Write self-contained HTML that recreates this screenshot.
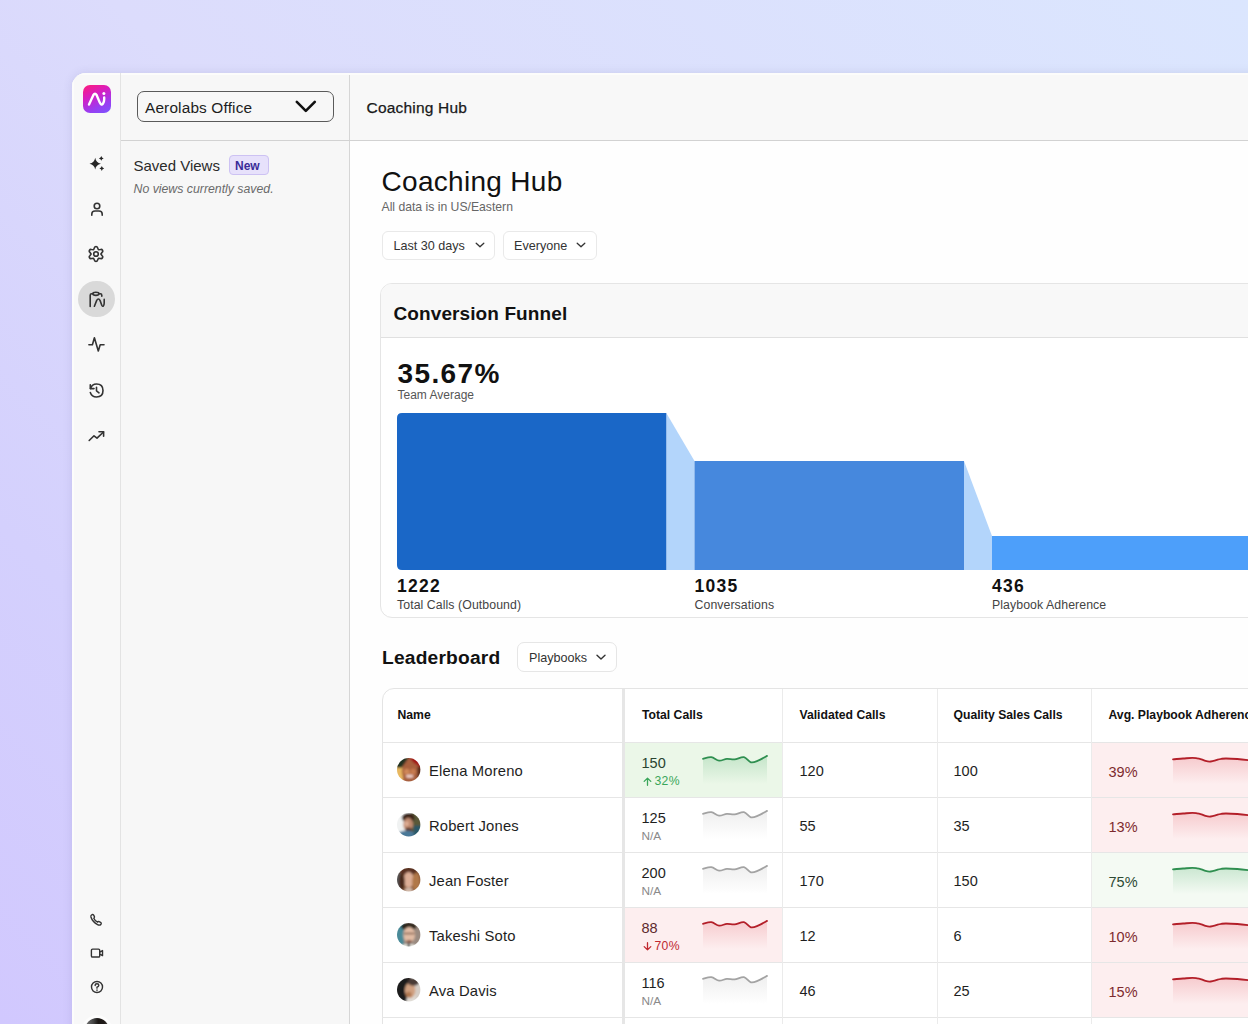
<!DOCTYPE html>
<html><head><meta charset="utf-8">
<style>
*{box-sizing:border-box;margin:0;padding:0}
html,body{width:1248px;height:1024px;overflow:hidden}
body{font-family:"Liberation Sans",sans-serif;position:relative;
background:linear-gradient(225deg,#dbe6fe 0%,#dcdcfc 50%,#d4d0fd 78%,#d1c8fe 100%);color:#1a1a1a}
.a{position:absolute;white-space:nowrap;line-height:1}
#win{position:absolute;left:72px;top:73px;width:1300px;height:1100px;background:#f8f8f8;border-top-left-radius:14px;box-shadow:0 0 10px rgba(70,70,120,.13);overflow:hidden}
#rail{position:absolute;left:0;top:0;width:49px;box-shadow:inset 2px 2px 0 #fcfcfb;height:100%;background:#f8f8f8;border-right:1px solid #e3e3e3}
#panel{position:absolute;left:49px;top:0;width:229px;height:100%;background:#f7f7f7;border-right:1px solid #d6d6d6}
#phead{position:absolute;left:49px;top:0;width:1300px;height:68px;border-bottom:1px solid #d2d2d2;box-shadow:inset 0 2px 0 #fcfcfb}
#mainbg{position:absolute;left:278px;top:68px;width:1100px;height:1100px;background:#fefefe}
svg{position:absolute;overflow:visible}
.ic{fill:none;stroke:#333;stroke-width:1.6;stroke-linecap:round;stroke-linejoin:round}
</style></head><body>
<div id="win">
  <div id="rail"></div>
  <div id="panel"></div>
  <div id="mainbg"></div>
  <div id="phead"></div>
</div>

<!-- logo -->
<div class="a" style="left:83px;top:85px;width:28px;height:28px;border-radius:7px;background:linear-gradient(155deg,#ff1d78 0%,#d81ebf 35%,#9c3cf0 70%,#7a56ff 100%)"></div>
<svg style="left:83px;top:85px" width="28" height="28" viewBox="0 0 28 28"><path d="M6 19.6 L10.4 10 Q12 7.4 13.6 10 L16.8 17.6 Q18.4 21 20 18.6 Q21.2 16.8 21.2 14.2 V12.4" fill="none" stroke="#fff" stroke-width="2.4" stroke-linecap="round" stroke-linejoin="round"/><circle cx="20.9" cy="8.6" r="1.5" fill="#fff"/></svg>

<!-- rail icons -->
<svg style="left:88px;top:155px" width="17" height="17" viewBox="0 0 17 17"><path d="M7.2 2.8 Q8 7.8 12.9 8.7 Q8 9.6 7.2 14.5 Q6.4 9.6 1.5 8.7 Q6.4 7.8 7.2 2.8Z" fill="#262626"/><path d="M13.3 1 Q13.7 3 15.7 3.4 Q13.7 3.8 13.3 5.8 Q12.9 3.8 10.9 3.4 Q12.9 3 13.3 1Z" fill="#262626"/><path d="M13.8 11.1 Q14.2 13.1 16.2 13.5 Q14.2 13.9 13.8 15.9 Q13.4 13.9 11.4 13.5 Q13.4 13.1 13.8 11.1Z" fill="#262626"/></svg>
<svg style="left:89px;top:201px" width="16" height="16" viewBox="0 0 16 16"><circle class="ic" cx="8" cy="5" r="2.8"/><path class="ic" d="M2.8 14.2 V13 Q2.8 10 6 10 H10 Q13.2 10 13.2 13 V14.2"/></svg>
<svg style="left:84.2px;top:242.3px" width="24" height="24" viewBox="0 0 24 24"><path class="ic" stroke-width="1.5" d="M10.45 5.79 C10.75 4.10 13.25 4.10 13.55 5.79 L14.45 7.76 L16.60 7.55 C18.22 6.97 19.47 9.13 18.15 10.24 L16.90 12.00 L18.15 13.76 C19.47 14.87 18.22 17.03 16.60 16.45 L14.45 16.24 L13.55 18.21 C13.25 19.90 10.75 19.90 10.45 18.21 L9.55 16.24 L7.40 16.45 C5.78 17.03 4.53 14.87 5.85 13.76 L7.10 12.00 L5.85 10.24 C4.53 9.13 5.78 6.97 7.40 7.55 L9.55 7.76Z"/><circle class="ic" stroke-width="1.5" cx="12" cy="12" r="2.3"/></svg>
<div class="a" style="left:78.4px;top:280.6px;width:36.6px;height:36.6px;border-radius:50%;background:#d9d9d9"></div>
<svg style="left:89px;top:291px" width="17" height="17" viewBox="0 0 17 17"><path class="ic" stroke-width="1.7" d="M1.2 15.5 V4.2 Q1.2 2.7 2.7 2.7 H3.7"/><ellipse class="ic" stroke-width="1.6" cx="6.9" cy="2.8" rx="3.1" ry="1.6"/><path class="ic" stroke-width="1.7" d="M10 2.7 H11.4 Q12.8 2.7 12.8 4.2 V5.3"/><path class="ic" stroke-width="1.7" d="M5.4 15.2 L7.6 9.6 Q8.4 8 9.4 8 Q10.4 8 11.1 9.6 L12.8 14.2 Q13.4 15.6 14.3 15 Q15.2 14.3 15.2 12 V8.4"/></svg>
<svg style="left:88px;top:336px" width="17" height="17" viewBox="0 0 17 17"><path class="ic" stroke-width="1.6" d="M0.9 8.7 H4.4 L6.4 1.8 L10.3 15 L12.2 8.7 H16"/></svg>
<svg style="left:88px;top:382px" width="17" height="17" viewBox="0 0 17 17"><path class="ic" stroke-width="1.6" d="M2.5 6.5 Q4 2 8.5 2 Q15 2 15 8.5 Q15 15 8.5 15 Q3.8 15 2.3 10.5"/><path class="ic" stroke-width="1.6" d="M2.3 2.8 V6.6 H6"/><path class="ic" stroke-width="1.6" d="M8.5 5.2 V8.8 L11 10.8"/></svg>
<svg style="left:88px;top:427px" width="17" height="17" viewBox="0 0 17 17"><path class="ic" stroke-width="1.7" d="M1.2 13.5 L6 8.8 L9 11.2 L15.5 5"/><path class="ic" stroke-width="1.7" d="M11 4.8 H15.6 V9.3"/></svg>
<!-- bottom rail icons -->
<svg style="left:89.4px;top:912.9px" width="14" height="14" viewBox="0 0 16 16"><path class="ic" stroke-width="1.5" d="M3.5 1.8 Q1.8 2.5 2.2 4.5 Q4 10 9.8 13.3 Q12 14.5 13.6 13 Q14.6 11.6 13.2 10.6 L11.6 9.8 Q10.5 9.3 9.8 10.5 Q7 9.5 5.5 6 Q6.6 5.2 6.2 4.1 L5.3 2.4 Q4.6 1.4 3.5 1.8Z"/></svg>
<svg style="left:89.6px;top:946.2px" width="14" height="14" viewBox="0 0 16 16"><rect class="ic" stroke-width="1.5" x="1.6" y="3.6" width="9.5" height="9" rx="1.3"/><path class="ic" stroke-width="1.5" d="M11.1 7 L14.3 5.2 V11 L11.1 9.2"/></svg>
<svg style="left:89.5px;top:979.7px" width="14" height="14" viewBox="0 0 16 16"><circle class="ic" stroke-width="1.5" cx="8" cy="8" r="6.3"/><path class="ic" stroke-width="1.5" d="M5.9 6.2 Q5.9 4.2 8 4.2 Q10.1 4.2 10.1 6 Q10.1 7.4 8 8.3 V9.3"/><circle cx="8" cy="11.6" r="0.9" fill="#333"/></svg>
<div class="a" style="left:84.5px;top:1017.5px;width:24px;height:24px;border-radius:50%;box-shadow:0 0 0 3px #fdfdfd;background:linear-gradient(90deg,#777 0%,#444 35%,#1a1614 55%,#201a18 80%,#555 100%)"></div>

<!-- panel -->
<div class="a" style="left:137px;top:91px;width:197px;height:31px;border:1.3px solid #5a5a5a;border-radius:7px"></div>
<div class="a" style="left:145px;top:100px;font-size:15.4px;color:#1d1d1d;letter-spacing:0.15px">Aerolabs Office</div>
<svg style="left:295px;top:100px" width="22" height="13" viewBox="0 0 22 13"><path d="M1.8 1.8 L10.8 10.8 L19.8 1.8" fill="none" stroke="#111" stroke-width="2.6" stroke-linecap="round" stroke-linejoin="round"/></svg>

<div class="a" style="left:133.5px;top:158px;font-size:15px;color:#2a2a2a">Saved Views</div>
<div class="a" style="left:229px;top:155px;width:40px;height:20px;border-radius:4px;background:#e7e1fb;border:1px solid #cdc2f3"></div>
<div class="a" style="left:235px;top:159.5px;font-size:12px;font-weight:bold;color:#3a2c98">New</div>
<div class="a" style="left:133.5px;top:183px;font-size:12.3px;font-style:italic;color:#6a6a6a">No views currently saved.</div>

<!-- header -->
<div class="a" style="left:366.5px;top:99.5px;font-size:15.5px;color:#1a1a1a;-webkit-text-stroke:0.25px #1a1a1a;letter-spacing:0.2px">Coaching Hub</div>

<!-- main title -->
<div class="a" style="left:381.5px;top:168px;font-size:28px;color:#111;letter-spacing:0.3px">Coaching Hub</div>
<div class="a" style="left:381.5px;top:200.5px;font-size:12.2px;color:#666">All data is in US/Eastern</div>

<div class="a" style="left:382px;top:231px;width:113px;height:29px;border:1px solid #e9e9e9;border-radius:6px;background:#fff"></div>
<div class="a" style="left:393.5px;top:239.5px;font-size:12.6px;color:#333">Last 30 days</div>
<svg style="left:475px;top:242px" width="10" height="7" viewBox="0 0 10 7"><path d="M1.2 1.2 L5 4.8 L8.8 1.2" fill="none" stroke="#333" stroke-width="1.3" stroke-linecap="round" stroke-linejoin="round"/></svg>
<div class="a" style="left:502.5px;top:231px;width:94px;height:29px;border:1px solid #e9e9e9;border-radius:6px;background:#fff"></div>
<div class="a" style="left:514px;top:239.5px;font-size:12.6px;color:#333">Everyone</div>
<svg style="left:576px;top:242px" width="10" height="7" viewBox="0 0 10 7"><path d="M1.2 1.2 L5 4.8 L8.8 1.2" fill="none" stroke="#333" stroke-width="1.3" stroke-linecap="round" stroke-linejoin="round"/></svg>

<!-- funnel card -->
<div class="a" style="left:380px;top:283px;width:900px;height:335px;border:1px solid #e5e5e5;border-radius:12px;background:#fff;overflow:hidden">
  <div style="position:absolute;left:0;top:0;width:100%;height:54px;background:#f8f8f8;border-bottom:1px solid #e0e0e0"></div>
</div>
<div class="a" style="left:393.5px;top:303.5px;font-size:19px;font-weight:bold;color:#111;letter-spacing:0.1px">Conversion Funnel</div>
<div class="a" style="left:397.5px;top:360px;font-size:28px;font-weight:bold;color:#111;letter-spacing:1.4px">35.67%</div>
<div class="a" style="left:397.5px;top:388.5px;font-size:12px;color:#555">Team Average</div>

<svg style="left:0;top:0" width="1248" height="1024">
  <path d="M666.3 413 L694.5 461 V570 H666.3Z" fill="#b3d5fb"/>
  <path d="M964 461 L992 536 V570 H964Z" fill="#b3d5fb"/>
  <path d="M402 413 H666.3 V570 H402 Q397 570 397 565 V418 Q397 413 402 413Z" fill="#1a67c7"/>
  <rect x="694.5" y="461" width="269.5" height="109" fill="#4688dd"/>
  <rect x="992" y="536" width="300" height="34" fill="#4d9ffa"/>
</svg>
<div class="a" style="left:397px;top:578px;font-size:17.5px;font-weight:bold;color:#111;letter-spacing:1.3px">1222</div>
<div class="a" style="left:397px;top:598.6px;font-size:12.3px;color:#444;letter-spacing:0.08px">Total Calls (Outbound)</div>
<div class="a" style="left:694.5px;top:578px;font-size:17.5px;font-weight:bold;color:#111;letter-spacing:1.3px">1035</div>
<div class="a" style="left:694.5px;top:598.6px;font-size:12.3px;color:#444;letter-spacing:0.08px">Conversations</div>
<div class="a" style="left:992px;top:578px;font-size:17.5px;font-weight:bold;color:#111;letter-spacing:1.3px">436</div>
<div class="a" style="left:992px;top:598.6px;font-size:12.3px;color:#444;letter-spacing:0.08px">Playbook Adherence</div>

<!-- leaderboard -->
<div class="a" style="left:382px;top:647.5px;font-size:19.2px;font-weight:bold;color:#111;letter-spacing:0.2px">Leaderboard</div>
<div class="a" style="left:517px;top:642px;width:100px;height:30px;border:1px solid #e6e6e6;border-radius:7px;background:#fff"></div>
<div class="a" style="left:529px;top:652px;font-size:12.6px;color:#333">Playbooks</div>
<svg style="left:596px;top:654px" width="10" height="7" viewBox="0 0 10 7"><path d="M1 1.2 L5 5 L9 1.2" fill="none" stroke="#333" stroke-width="1.4" stroke-linecap="round" stroke-linejoin="round"/></svg>

<div id="table">
<div class="a" style="left:381.5px;top:688px;width:900px;height:400px;border:1px solid #e4e4e4;border-radius:12px;background:#fff"></div>
<div class="a" style="left:625px;top:743px;width:157px;height:54px;background:#ebf7e8"></div>
<div class="a" style="left:1092px;top:743px;width:160px;height:54px;background:#fdeeef"></div>
<div class="a" style="left:1092px;top:798px;width:160px;height:54px;background:#fdeeef"></div>
<div class="a" style="left:1092px;top:853px;width:160px;height:54px;background:#f4faf3"></div>
<div class="a" style="left:625px;top:908px;width:157px;height:54px;background:#fdeeef"></div>
<div class="a" style="left:1092px;top:908px;width:160px;height:54px;background:#fdeeef"></div>
<div class="a" style="left:1092px;top:963px;width:160px;height:54px;background:#fdeeef"></div>
<div class="a" style="left:382px;top:742px;width:870px;height:1px;background:#e6e6e6"></div>
<div class="a" style="left:382px;top:797px;width:870px;height:1px;background:#e6e6e6"></div>
<div class="a" style="left:382px;top:852px;width:870px;height:1px;background:#e6e6e6"></div>
<div class="a" style="left:382px;top:907px;width:870px;height:1px;background:#e6e6e6"></div>
<div class="a" style="left:382px;top:962px;width:870px;height:1px;background:#e6e6e6"></div>
<div class="a" style="left:382px;top:1017px;width:870px;height:1px;background:#e6e6e6"></div>
<div class="a" style="left:622px;top:689px;width:3px;height:340px;background:#e6e6e6"></div>
<div class="a" style="left:782px;top:689px;width:1px;height:340px;background:#ebebeb"></div>
<div class="a" style="left:937px;top:689px;width:1px;height:340px;background:#ebebeb"></div>
<div class="a" style="left:1091px;top:689px;width:1px;height:340px;background:#ebebeb"></div>
<div class="a" style="left:397.5px;top:709.0px;font-size:12.2px;color:#111;font-weight:bold;">Name</div>
<div class="a" style="left:642px;top:709.0px;font-size:12.2px;color:#111;font-weight:bold;">Total Calls</div>
<div class="a" style="left:799.5px;top:709.0px;font-size:12.2px;color:#111;font-weight:bold;">Validated Calls</div>
<div class="a" style="left:953.5px;top:709.0px;font-size:12.2px;color:#111;font-weight:bold;">Quality Sales Calls</div>
<div class="a" style="left:1108.5px;top:709.0px;font-size:12.2px;color:#111;font-weight:bold;">Avg. Playbook Adherence</div>
<svg style="left:397.3px;top:758.3px" width="23.4" height="23.4" viewBox="0 0 24 24"><defs><clipPath id="ac0"><circle cx="12" cy="12" r="12"/></clipPath><filter id="bl0" x="-20%" y="-20%" width="140%" height="140%"><feGaussianBlur stdDeviation="1"/></filter></defs><g clip-path="url(#ac0)"><g filter="url(#bl0)"><rect x="-2" y="-2" width="28" height="28" fill="#a86040"/><rect x="-2" y="6" width="8" height="18" fill="#e8b860"/><path d="M0 -2 H13 L5 10 H-2Z" fill="#203020"/><path d="M11 -2 H26 V11 L17 5Z" fill="#a01818"/><ellipse cx="13" cy="13.5" rx="8" ry="9.5" fill="#a8603e"/><ellipse cx="10" cy="14" rx="3" ry="3" fill="#d08858"/><ellipse cx="16.5" cy="14" rx="2.8" ry="3" fill="#c87c50"/><ellipse cx="13" cy="18.6" rx="3.8" ry="1.6" fill="#f0d0c8"/><rect x="21" y="9" width="5" height="14" fill="#5a2a1a"/></g></g></svg>
<div class="a" style="left:429px;top:763.7px;font-size:14.8px;color:#1e1e1e;letter-spacing:0.15px;">Elena Moreno</div>
<div class="a" style="left:641.5px;top:756.4px;font-size:14.5px;color:#2a4430;">150</div>
<svg style="left:643px;top:776.6px" width="9" height="9" viewBox="0 0 9 9"><path d="M4.5 8.3 V1.2 M1.2 4.4 L4.5 1.1 L7.8 4.4" fill="none" stroke="#3aa65a" stroke-width="1.3" stroke-linecap="round" stroke-linejoin="round"/></svg>
<div class="a" style="left:654.5px;top:775.3px;font-size:12.2px;color:#3aa65a;letter-spacing:0.3px;">32%</div>
<svg style="left:703.3px;top:754.5px" width="64" height="29" viewBox="0 0 64 29"><defs><linearGradient id="sg1" x1="0" y1="0" x2="0" y2="1"><stop offset="0" stop-color="#3ba55c" stop-opacity="0.22"/><stop offset="1" stop-color="#3ba55c" stop-opacity="0"/></linearGradient></defs><path d="M0.0 3.8 C1.4 3.5 5.7 1.9 8.34 2.2 C11.0 2.5 13.5 5.4 16.1 5.7 C18.7 6.0 21.3 4.0 23.86 3.8 C26.4 3.6 28.8 4.7 31.62 4.4 C34.5 4.1 38.2 1.7 40.93 2.2 C43.6 2.7 45.6 6.7 47.92 7.3 C50.3 7.9 52.3 6.8 55.0 5.7 C57.7 4.6 62.5 1.7 64.02 0.9 V29 H0Z" fill="url(#sg1)"/><path d="M0.0 3.8 C1.4 3.5 5.7 1.9 8.34 2.2 C11.0 2.5 13.5 5.4 16.1 5.7 C18.7 6.0 21.3 4.0 23.86 3.8 C26.4 3.6 28.8 4.7 31.62 4.4 C34.5 4.1 38.2 1.7 40.93 2.2 C43.6 2.7 45.6 6.7 47.92 7.3 C50.3 7.9 52.3 6.8 55.0 5.7 C57.7 4.6 62.5 1.7 64.02 0.9" fill="none" stroke="#2f8f50" stroke-width="1.8" stroke-linecap="round"/></svg>
<div class="a" style="left:799.5px;top:764.2px;font-size:14.5px;color:#1e1e1e;">120</div>
<div class="a" style="left:953.5px;top:764.2px;font-size:14.5px;color:#1e1e1e;">100</div>
<div class="a" style="left:1108.5px;top:764.7px;font-size:14.5px;color:#7d2a2e;">39%</div>
<svg style="left:1173px;top:756px" width="80" height="28" viewBox="0 0 80 28"><defs><linearGradient id="sg2" x1="0" y1="0" x2="0" y2="1"><stop offset="0" stop-color="#e0505a" stop-opacity="0.22"/><stop offset="1" stop-color="#e0505a" stop-opacity="0"/></linearGradient></defs><path d="M0 3.3 C1.7 3.2 6.8 2.7 10 2.5 C13.2 2.3 17.1 1.9 19.4 1.9 C21.7 1.9 22.5 2.1 24 2.3 C25.5 2.5 27.0 2.9 28.4 3.3 C29.8 3.7 31.1 4.5 32.5 4.9 C33.9 5.3 35.2 5.6 36.5 5.6 C37.8 5.6 39.1 5.2 40.5 4.9 C41.9 4.6 43.3 4.0 44.6 3.6 C45.9 3.2 47.1 3.0 48.5 2.8 C49.9 2.6 50.4 2.5 53 2.5 C55.6 2.5 60.1 2.7 64.3 3.0 C68.5 3.3 75.7 4.2 78 4.5 V28 H0Z" fill="url(#sg2)"/><path d="M0 3.3 C1.7 3.2 6.8 2.7 10 2.5 C13.2 2.3 17.1 1.9 19.4 1.9 C21.7 1.9 22.5 2.1 24 2.3 C25.5 2.5 27.0 2.9 28.4 3.3 C29.8 3.7 31.1 4.5 32.5 4.9 C33.9 5.3 35.2 5.6 36.5 5.6 C37.8 5.6 39.1 5.2 40.5 4.9 C41.9 4.6 43.3 4.0 44.6 3.6 C45.9 3.2 47.1 3.0 48.5 2.8 C49.9 2.6 50.4 2.5 53 2.5 C55.6 2.5 60.1 2.7 64.3 3.0 C68.5 3.3 75.7 4.2 78 4.5" fill="none" stroke="#b31f29" stroke-width="1.8" stroke-linecap="round"/></svg>
<svg style="left:397.3px;top:813.3px" width="23.4" height="23.4" viewBox="0 0 24 24"><defs><clipPath id="ac1"><circle cx="12" cy="12" r="12"/></clipPath><filter id="bl1" x="-20%" y="-20%" width="140%" height="140%"><feGaussianBlur stdDeviation="1"/></filter></defs><g clip-path="url(#ac1)"><g filter="url(#bl1)"><rect x="-2" y="-2" width="28" height="28" fill="#f0f2f2"/><path d="M14 -2 H26 V26 H14Z" fill="#5a5838"/><ellipse cx="11.5" cy="5" rx="6.5" ry="5" fill="#3a2418"/><ellipse cx="11.5" cy="12" rx="5" ry="7" fill="#c08a70"/><ellipse cx="10" cy="11" rx="2" ry="2.5" fill="#e0b098"/><ellipse cx="12" cy="17" rx="3.5" ry="2.2" fill="#5a3a30"/><ellipse cx="10" cy="24" rx="11" ry="6" fill="#4a7898"/><rect x="17" y="13" width="9" height="12" fill="#2a5868"/></g></g></svg>
<div class="a" style="left:429px;top:818.7px;font-size:14.8px;color:#1e1e1e;letter-spacing:0.15px;">Robert Jones</div>
<div class="a" style="left:641.5px;top:811.4px;font-size:14.5px;color:#1e1e1e;">125</div>
<div class="a" style="left:641.5px;top:830.6px;font-size:11.8px;color:#8a8a8a;">N/A</div>
<svg style="left:703.3px;top:809.5px" width="64" height="29" viewBox="0 0 64 29"><defs><linearGradient id="sg3" x1="0" y1="0" x2="0" y2="1"><stop offset="0" stop-color="#bdbdbd" stop-opacity="0.25"/><stop offset="1" stop-color="#bdbdbd" stop-opacity="0"/></linearGradient></defs><path d="M0.0 3.8 C1.4 3.5 5.7 1.9 8.34 2.2 C11.0 2.5 13.5 5.4 16.1 5.7 C18.7 6.0 21.3 4.0 23.86 3.8 C26.4 3.6 28.8 4.7 31.62 4.4 C34.5 4.1 38.2 1.7 40.93 2.2 C43.6 2.7 45.6 6.7 47.92 7.3 C50.3 7.9 52.3 6.8 55.0 5.7 C57.7 4.6 62.5 1.7 64.02 0.9 V29 H0Z" fill="url(#sg3)"/><path d="M0.0 3.8 C1.4 3.5 5.7 1.9 8.34 2.2 C11.0 2.5 13.5 5.4 16.1 5.7 C18.7 6.0 21.3 4.0 23.86 3.8 C26.4 3.6 28.8 4.7 31.62 4.4 C34.5 4.1 38.2 1.7 40.93 2.2 C43.6 2.7 45.6 6.7 47.92 7.3 C50.3 7.9 52.3 6.8 55.0 5.7 C57.7 4.6 62.5 1.7 64.02 0.9" fill="none" stroke="#a3a3a3" stroke-width="1.8" stroke-linecap="round"/></svg>
<div class="a" style="left:799.5px;top:819.2px;font-size:14.5px;color:#1e1e1e;">55</div>
<div class="a" style="left:953.5px;top:819.2px;font-size:14.5px;color:#1e1e1e;">35</div>
<div class="a" style="left:1108.5px;top:819.7px;font-size:14.5px;color:#7d2a2e;">13%</div>
<svg style="left:1173px;top:811px" width="80" height="28" viewBox="0 0 80 28"><defs><linearGradient id="sg4" x1="0" y1="0" x2="0" y2="1"><stop offset="0" stop-color="#e0505a" stop-opacity="0.22"/><stop offset="1" stop-color="#e0505a" stop-opacity="0"/></linearGradient></defs><path d="M0 3.3 C1.7 3.2 6.8 2.7 10 2.5 C13.2 2.3 17.1 1.9 19.4 1.9 C21.7 1.9 22.5 2.1 24 2.3 C25.5 2.5 27.0 2.9 28.4 3.3 C29.8 3.7 31.1 4.5 32.5 4.9 C33.9 5.3 35.2 5.6 36.5 5.6 C37.8 5.6 39.1 5.2 40.5 4.9 C41.9 4.6 43.3 4.0 44.6 3.6 C45.9 3.2 47.1 3.0 48.5 2.8 C49.9 2.6 50.4 2.5 53 2.5 C55.6 2.5 60.1 2.7 64.3 3.0 C68.5 3.3 75.7 4.2 78 4.5 V28 H0Z" fill="url(#sg4)"/><path d="M0 3.3 C1.7 3.2 6.8 2.7 10 2.5 C13.2 2.3 17.1 1.9 19.4 1.9 C21.7 1.9 22.5 2.1 24 2.3 C25.5 2.5 27.0 2.9 28.4 3.3 C29.8 3.7 31.1 4.5 32.5 4.9 C33.9 5.3 35.2 5.6 36.5 5.6 C37.8 5.6 39.1 5.2 40.5 4.9 C41.9 4.6 43.3 4.0 44.6 3.6 C45.9 3.2 47.1 3.0 48.5 2.8 C49.9 2.6 50.4 2.5 53 2.5 C55.6 2.5 60.1 2.7 64.3 3.0 C68.5 3.3 75.7 4.2 78 4.5" fill="none" stroke="#b31f29" stroke-width="1.8" stroke-linecap="round"/></svg>
<svg style="left:397.3px;top:868.3px" width="23.4" height="23.4" viewBox="0 0 24 24"><defs><clipPath id="ac2"><circle cx="12" cy="12" r="12"/></clipPath><filter id="bl2" x="-20%" y="-20%" width="140%" height="140%"><feGaussianBlur stdDeviation="1"/></filter></defs><g clip-path="url(#ac2)"><g filter="url(#bl2)"><rect x="-2" y="-2" width="28" height="28" fill="#8a5a3a"/><rect x="-2" y="3" width="5" height="19" fill="#585858"/><ellipse cx="12" cy="3" rx="9" ry="4.5" fill="#5a3020"/><ellipse cx="12" cy="12" rx="5.3" ry="8" fill="#dcae96"/><ellipse cx="19.5" cy="14" rx="4" ry="9" fill="#b07848"/><ellipse cx="5" cy="14" rx="3" ry="9" fill="#4a2c1c"/><ellipse cx="12" cy="23" rx="4" ry="3" fill="#d0b8a8"/></g></g></svg>
<div class="a" style="left:429px;top:873.7px;font-size:14.8px;color:#1e1e1e;letter-spacing:0.15px;">Jean Foster</div>
<div class="a" style="left:641.5px;top:866.4px;font-size:14.5px;color:#1e1e1e;">200</div>
<div class="a" style="left:641.5px;top:885.6px;font-size:11.8px;color:#8a8a8a;">N/A</div>
<svg style="left:703.3px;top:864.5px" width="64" height="29" viewBox="0 0 64 29"><defs><linearGradient id="sg5" x1="0" y1="0" x2="0" y2="1"><stop offset="0" stop-color="#bdbdbd" stop-opacity="0.25"/><stop offset="1" stop-color="#bdbdbd" stop-opacity="0"/></linearGradient></defs><path d="M0.0 3.8 C1.4 3.5 5.7 1.9 8.34 2.2 C11.0 2.5 13.5 5.4 16.1 5.7 C18.7 6.0 21.3 4.0 23.86 3.8 C26.4 3.6 28.8 4.7 31.62 4.4 C34.5 4.1 38.2 1.7 40.93 2.2 C43.6 2.7 45.6 6.7 47.92 7.3 C50.3 7.9 52.3 6.8 55.0 5.7 C57.7 4.6 62.5 1.7 64.02 0.9 V29 H0Z" fill="url(#sg5)"/><path d="M0.0 3.8 C1.4 3.5 5.7 1.9 8.34 2.2 C11.0 2.5 13.5 5.4 16.1 5.7 C18.7 6.0 21.3 4.0 23.86 3.8 C26.4 3.6 28.8 4.7 31.62 4.4 C34.5 4.1 38.2 1.7 40.93 2.2 C43.6 2.7 45.6 6.7 47.92 7.3 C50.3 7.9 52.3 6.8 55.0 5.7 C57.7 4.6 62.5 1.7 64.02 0.9" fill="none" stroke="#a3a3a3" stroke-width="1.8" stroke-linecap="round"/></svg>
<div class="a" style="left:799.5px;top:874.2px;font-size:14.5px;color:#1e1e1e;">170</div>
<div class="a" style="left:953.5px;top:874.2px;font-size:14.5px;color:#1e1e1e;">150</div>
<div class="a" style="left:1108.5px;top:874.7px;font-size:14.5px;color:#2d4a33;">75%</div>
<svg style="left:1173px;top:866px" width="80" height="28" viewBox="0 0 80 28"><defs><linearGradient id="sg6" x1="0" y1="0" x2="0" y2="1"><stop offset="0" stop-color="#3ba55c" stop-opacity="0.22"/><stop offset="1" stop-color="#3ba55c" stop-opacity="0"/></linearGradient></defs><path d="M0 3.3 C1.7 3.2 6.8 2.7 10 2.5 C13.2 2.3 17.1 1.9 19.4 1.9 C21.7 1.9 22.5 2.1 24 2.3 C25.5 2.5 27.0 2.9 28.4 3.3 C29.8 3.7 31.1 4.5 32.5 4.9 C33.9 5.3 35.2 5.6 36.5 5.6 C37.8 5.6 39.1 5.2 40.5 4.9 C41.9 4.6 43.3 4.0 44.6 3.6 C45.9 3.2 47.1 3.0 48.5 2.8 C49.9 2.6 50.4 2.5 53 2.5 C55.6 2.5 60.1 2.7 64.3 3.0 C68.5 3.3 75.7 4.2 78 4.5 V28 H0Z" fill="url(#sg6)"/><path d="M0 3.3 C1.7 3.2 6.8 2.7 10 2.5 C13.2 2.3 17.1 1.9 19.4 1.9 C21.7 1.9 22.5 2.1 24 2.3 C25.5 2.5 27.0 2.9 28.4 3.3 C29.8 3.7 31.1 4.5 32.5 4.9 C33.9 5.3 35.2 5.6 36.5 5.6 C37.8 5.6 39.1 5.2 40.5 4.9 C41.9 4.6 43.3 4.0 44.6 3.6 C45.9 3.2 47.1 3.0 48.5 2.8 C49.9 2.6 50.4 2.5 53 2.5 C55.6 2.5 60.1 2.7 64.3 3.0 C68.5 3.3 75.7 4.2 78 4.5" fill="none" stroke="#2f8f50" stroke-width="1.8" stroke-linecap="round"/></svg>
<svg style="left:397.3px;top:923.3px" width="23.4" height="23.4" viewBox="0 0 24 24"><defs><clipPath id="ac3"><circle cx="12" cy="12" r="12"/></clipPath><filter id="bl3" x="-20%" y="-20%" width="140%" height="140%"><feGaussianBlur stdDeviation="1"/></filter></defs><g clip-path="url(#ac3)"><g filter="url(#bl3)"><rect x="-2" y="-2" width="28" height="28" fill="#9a8a80"/><rect x="-2" y="-2" width="9" height="28" fill="#4a8a98"/><ellipse cx="12" cy="3.5" rx="8" ry="4" fill="#2a2018"/><ellipse cx="12.5" cy="12" rx="6" ry="8" fill="#e2bca4"/><rect x="7" y="10" width="11" height="1.6" fill="#5a3828" opacity="0.7"/><ellipse cx="12.5" cy="19" rx="3" ry="1.5" fill="#8a5a48"/><ellipse cx="12" cy="25" rx="9" ry="3.5" fill="#e8e8e0"/><rect x="11" y="21" width="2" height="5" fill="#2a2a30"/></g></g></svg>
<div class="a" style="left:429px;top:928.7px;font-size:14.8px;color:#1e1e1e;letter-spacing:0.15px;">Takeshi Soto</div>
<div class="a" style="left:641.5px;top:921.4px;font-size:14.5px;color:#5e2a2e;">88</div>
<svg style="left:643px;top:941.6px" width="9" height="9" viewBox="0 0 9 9"><path d="M4.5 0.7 V7.8 M1.2 4.6 L4.5 7.9 L7.8 4.6" fill="none" stroke="#c0282f" stroke-width="1.3" stroke-linecap="round" stroke-linejoin="round"/></svg>
<div class="a" style="left:654.5px;top:940.3px;font-size:12.2px;color:#c0282f;letter-spacing:0.3px;">70%</div>
<svg style="left:703.3px;top:919.5px" width="64" height="29" viewBox="0 0 64 29"><defs><linearGradient id="sg7" x1="0" y1="0" x2="0" y2="1"><stop offset="0" stop-color="#e0505a" stop-opacity="0.22"/><stop offset="1" stop-color="#e0505a" stop-opacity="0"/></linearGradient></defs><path d="M0.0 3.8 C1.4 3.5 5.7 1.9 8.34 2.2 C11.0 2.5 13.5 5.4 16.1 5.7 C18.7 6.0 21.3 4.0 23.86 3.8 C26.4 3.6 28.8 4.7 31.62 4.4 C34.5 4.1 38.2 1.7 40.93 2.2 C43.6 2.7 45.6 6.7 47.92 7.3 C50.3 7.9 52.3 6.8 55.0 5.7 C57.7 4.6 62.5 1.7 64.02 0.9 V29 H0Z" fill="url(#sg7)"/><path d="M0.0 3.8 C1.4 3.5 5.7 1.9 8.34 2.2 C11.0 2.5 13.5 5.4 16.1 5.7 C18.7 6.0 21.3 4.0 23.86 3.8 C26.4 3.6 28.8 4.7 31.62 4.4 C34.5 4.1 38.2 1.7 40.93 2.2 C43.6 2.7 45.6 6.7 47.92 7.3 C50.3 7.9 52.3 6.8 55.0 5.7 C57.7 4.6 62.5 1.7 64.02 0.9" fill="none" stroke="#b31f29" stroke-width="1.8" stroke-linecap="round"/></svg>
<div class="a" style="left:799.5px;top:929.2px;font-size:14.5px;color:#1e1e1e;">12</div>
<div class="a" style="left:953.5px;top:929.2px;font-size:14.5px;color:#1e1e1e;">6</div>
<div class="a" style="left:1108.5px;top:929.7px;font-size:14.5px;color:#7d2a2e;">10%</div>
<svg style="left:1173px;top:921px" width="80" height="28" viewBox="0 0 80 28"><defs><linearGradient id="sg8" x1="0" y1="0" x2="0" y2="1"><stop offset="0" stop-color="#e0505a" stop-opacity="0.22"/><stop offset="1" stop-color="#e0505a" stop-opacity="0"/></linearGradient></defs><path d="M0 3.3 C1.7 3.2 6.8 2.7 10 2.5 C13.2 2.3 17.1 1.9 19.4 1.9 C21.7 1.9 22.5 2.1 24 2.3 C25.5 2.5 27.0 2.9 28.4 3.3 C29.8 3.7 31.1 4.5 32.5 4.9 C33.9 5.3 35.2 5.6 36.5 5.6 C37.8 5.6 39.1 5.2 40.5 4.9 C41.9 4.6 43.3 4.0 44.6 3.6 C45.9 3.2 47.1 3.0 48.5 2.8 C49.9 2.6 50.4 2.5 53 2.5 C55.6 2.5 60.1 2.7 64.3 3.0 C68.5 3.3 75.7 4.2 78 4.5 V28 H0Z" fill="url(#sg8)"/><path d="M0 3.3 C1.7 3.2 6.8 2.7 10 2.5 C13.2 2.3 17.1 1.9 19.4 1.9 C21.7 1.9 22.5 2.1 24 2.3 C25.5 2.5 27.0 2.9 28.4 3.3 C29.8 3.7 31.1 4.5 32.5 4.9 C33.9 5.3 35.2 5.6 36.5 5.6 C37.8 5.6 39.1 5.2 40.5 4.9 C41.9 4.6 43.3 4.0 44.6 3.6 C45.9 3.2 47.1 3.0 48.5 2.8 C49.9 2.6 50.4 2.5 53 2.5 C55.6 2.5 60.1 2.7 64.3 3.0 C68.5 3.3 75.7 4.2 78 4.5" fill="none" stroke="#b31f29" stroke-width="1.8" stroke-linecap="round"/></svg>
<svg style="left:397.3px;top:978.3px" width="23.4" height="23.4" viewBox="0 0 24 24"><defs><clipPath id="ac4"><circle cx="12" cy="12" r="12"/></clipPath><filter id="bl4" x="-20%" y="-20%" width="140%" height="140%"><feGaussianBlur stdDeviation="1"/></filter></defs><g clip-path="url(#ac4)"><g filter="url(#bl4)"><rect x="-2" y="-2" width="28" height="28" fill="#e0dcd6"/><path d="M-2 -2 H15 L9 26 H-2Z" fill="#1c1a1e"/><ellipse cx="13.5" cy="12.5" rx="5.5" ry="8" fill="#d0a080"/><ellipse cx="12" cy="17" rx="3" ry="3" fill="#b07850"/><ellipse cx="17" cy="4" rx="6" ry="4" fill="#4a3a34"/><rect x="19" y="8" width="6" height="16" fill="#d4ccc4"/></g></g></svg>
<div class="a" style="left:429px;top:983.7px;font-size:14.8px;color:#1e1e1e;letter-spacing:0.15px;">Ava Davis</div>
<div class="a" style="left:641.5px;top:976.4px;font-size:14.5px;color:#1e1e1e;">116</div>
<div class="a" style="left:641.5px;top:995.6px;font-size:11.8px;color:#8a8a8a;">N/A</div>
<svg style="left:703.3px;top:974.5px" width="64" height="29" viewBox="0 0 64 29"><defs><linearGradient id="sg9" x1="0" y1="0" x2="0" y2="1"><stop offset="0" stop-color="#bdbdbd" stop-opacity="0.25"/><stop offset="1" stop-color="#bdbdbd" stop-opacity="0"/></linearGradient></defs><path d="M0.0 3.8 C1.4 3.5 5.7 1.9 8.34 2.2 C11.0 2.5 13.5 5.4 16.1 5.7 C18.7 6.0 21.3 4.0 23.86 3.8 C26.4 3.6 28.8 4.7 31.62 4.4 C34.5 4.1 38.2 1.7 40.93 2.2 C43.6 2.7 45.6 6.7 47.92 7.3 C50.3 7.9 52.3 6.8 55.0 5.7 C57.7 4.6 62.5 1.7 64.02 0.9 V29 H0Z" fill="url(#sg9)"/><path d="M0.0 3.8 C1.4 3.5 5.7 1.9 8.34 2.2 C11.0 2.5 13.5 5.4 16.1 5.7 C18.7 6.0 21.3 4.0 23.86 3.8 C26.4 3.6 28.8 4.7 31.62 4.4 C34.5 4.1 38.2 1.7 40.93 2.2 C43.6 2.7 45.6 6.7 47.92 7.3 C50.3 7.9 52.3 6.8 55.0 5.7 C57.7 4.6 62.5 1.7 64.02 0.9" fill="none" stroke="#a3a3a3" stroke-width="1.8" stroke-linecap="round"/></svg>
<div class="a" style="left:799.5px;top:984.2px;font-size:14.5px;color:#1e1e1e;">46</div>
<div class="a" style="left:953.5px;top:984.2px;font-size:14.5px;color:#1e1e1e;">25</div>
<div class="a" style="left:1108.5px;top:984.7px;font-size:14.5px;color:#7d2a2e;">15%</div>
<svg style="left:1173px;top:976px" width="80" height="28" viewBox="0 0 80 28"><defs><linearGradient id="sg10" x1="0" y1="0" x2="0" y2="1"><stop offset="0" stop-color="#e0505a" stop-opacity="0.22"/><stop offset="1" stop-color="#e0505a" stop-opacity="0"/></linearGradient></defs><path d="M0 3.3 C1.7 3.2 6.8 2.7 10 2.5 C13.2 2.3 17.1 1.9 19.4 1.9 C21.7 1.9 22.5 2.1 24 2.3 C25.5 2.5 27.0 2.9 28.4 3.3 C29.8 3.7 31.1 4.5 32.5 4.9 C33.9 5.3 35.2 5.6 36.5 5.6 C37.8 5.6 39.1 5.2 40.5 4.9 C41.9 4.6 43.3 4.0 44.6 3.6 C45.9 3.2 47.1 3.0 48.5 2.8 C49.9 2.6 50.4 2.5 53 2.5 C55.6 2.5 60.1 2.7 64.3 3.0 C68.5 3.3 75.7 4.2 78 4.5 V28 H0Z" fill="url(#sg10)"/><path d="M0 3.3 C1.7 3.2 6.8 2.7 10 2.5 C13.2 2.3 17.1 1.9 19.4 1.9 C21.7 1.9 22.5 2.1 24 2.3 C25.5 2.5 27.0 2.9 28.4 3.3 C29.8 3.7 31.1 4.5 32.5 4.9 C33.9 5.3 35.2 5.6 36.5 5.6 C37.8 5.6 39.1 5.2 40.5 4.9 C41.9 4.6 43.3 4.0 44.6 3.6 C45.9 3.2 47.1 3.0 48.5 2.8 C49.9 2.6 50.4 2.5 53 2.5 C55.6 2.5 60.1 2.7 64.3 3.0 C68.5 3.3 75.7 4.2 78 4.5" fill="none" stroke="#b31f29" stroke-width="1.8" stroke-linecap="round"/></svg>
<!--/T--></div>
</body></html>
